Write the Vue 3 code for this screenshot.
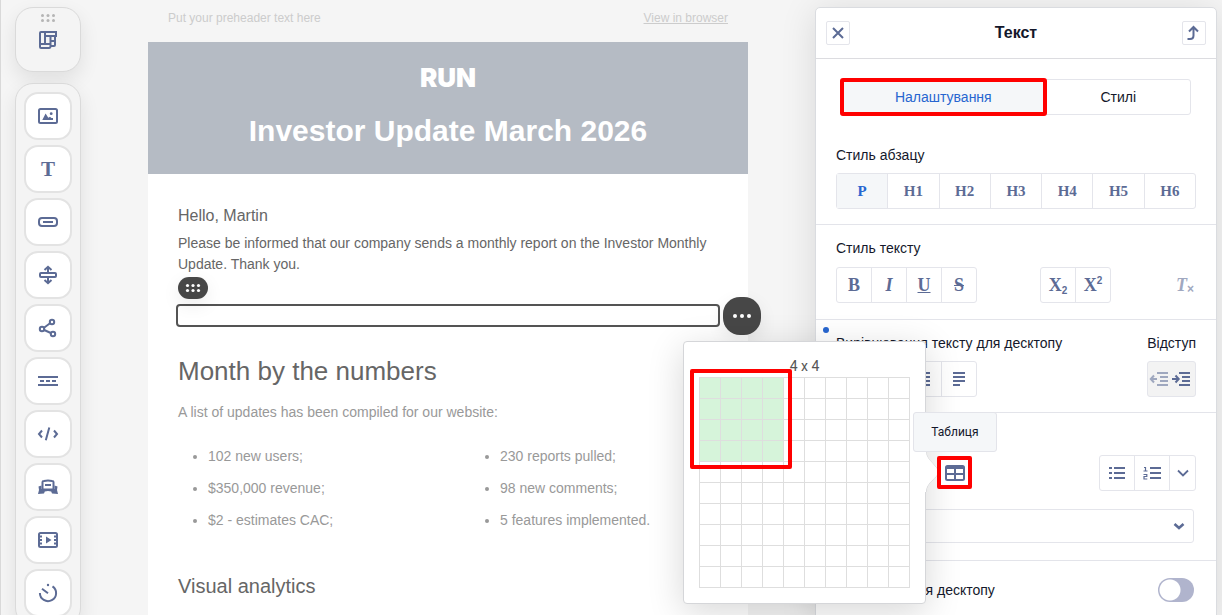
<script setup>
import { ref } from 'vue'

const paragraphStyles = ['P', 'H1', 'H2', 'H3', 'H4', 'H5', 'H6']
const activeStyle = ref('P')
const gridSize = 10
const picked = ref({ rows: 4, cols: 4 })
const isPicked = (i) =>
  i % gridSize < picked.value.cols && Math.floor(i / gridSize) < picked.value.rows
const pick = (i) => {
  picked.value = { rows: Math.floor(i / gridSize) + 1, cols: (i % gridSize) + 1 }
}
const leftList = ['102 new users;', '$350,000 revenue;', '$2 - estimates CAC;']
const rightList = ['230 reports pulled;', '98 new comments;', '5 features implemented.']
</script>

<template>
  <div class="editor">
    <aside class="rail">
      <div class="rail-top">
        <svg class="grip" width="14" height="8" viewBox="0 0 14 8" aria-hidden="true">
          <circle cx="1.500" cy="1.500" r="1.500" /><circle cx="7" cy="1.500" r="1.500" /><circle cx="12.500" cy="1.500" r="1.500" />
          <circle cx="1.500" cy="6.500" r="1.500" /><circle cx="7" cy="6.500" r="1.500" /><circle cx="12.500" cy="6.500" r="1.500" />
        </svg>
        <button class="plain" aria-label="Layouts">
          <svg class="icon" viewBox="0 0 24 24">
            <path d="M5 4H20V8H9V4M5 4Q4 4 4 5V19Q4 20 5 20H13Q14.500 20 14.500 18V8M4 16H14.500M9 8v8M14.500 13H19M19 8v9Q19 18 18 18H14.500" />
          </svg>
        </button>
      </div>
      <nav class="rail-list" aria-label="Blocks">
        <button class="tool" aria-label="Image">
          <svg class="icon" viewBox="0 0 24 24">
            <rect x="3" y="5" width="18" height="14" rx="1.500" />
            <path class="solid" d="M6.300 16 9.600 9.500l2.700 4.200 1.700-1 1.400 1.200H17V16z" />
            <circle class="solid" cx="15.200" cy="9.700" r="1.400" />
          </svg>
        </button>
        <button class="tool serif" aria-label="Text">T</button>
        <button class="tool" aria-label="Button">
          <svg class="icon" viewBox="0 0 24 24"><rect x="3" y="8" width="18" height="8" rx="3" /><path d="M7 12h10" /></svg>
        </button>
        <button class="tool" aria-label="Spacer">
          <svg class="icon" viewBox="0 0 24 24"><rect x="4" y="10" width="16" height="4" rx="1" /><path d="M12 10V4M8.500 7 12 3.800 15.500 7M12 14v6M8.500 17l3.500 3.200 3.500-3.200" /></svg>
        </button>
        <button class="tool" aria-label="Social">
          <svg class="icon" viewBox="0 0 24 24"><circle cx="16" cy="6" r="2.200" /><circle cx="6" cy="13" r="2.200" /><circle cx="17" cy="18" r="2.200" /><path d="M8 11.700 14 7.300M8.200 14l6.600 3" /></svg>
        </button>
        <button class="tool" aria-label="Divider">
          <svg class="icon" viewBox="0 0 24 24"><path d="M2 8h20M4 12h4M10 12h4M16 12h4M2 16h20" /></svg>
        </button>
        <button class="tool" aria-label="HTML">
          <svg class="icon" viewBox="0 0 24 24"><path d="M6 8.500 3 12l3 3.500M18 8.500 21 12l-3 3.500M13.300 5.500l-3.500 12.800" /></svg>
        </button>
        <button class="tool" aria-label="Banner">
          <svg class="icon" viewBox="0 0 24 24">
            <path d="M6.500 15V7Q6.500 6 8 6 12 5 16 6 17.500 6 17.500 7V15M5.500 14.500h13" /><path d="M9 10h6" />
            <path class="solid" d="M2.500 11.500 5.500 10.500V14h13v-3.500l3 1-.5 3.500 1 4-6-.5-.8-2q-3.200-.8-6.400 0l-.8 2-6 .5 1-4z" />
          </svg>
        </button>
        <button class="tool" aria-label="Video">
          <svg class="icon" viewBox="0 0 24 24"><rect x="3" y="5" width="18" height="14" rx="1.500" /><path d="M3 8.500h3M3 12h3M3 15.500h3M18 8.500h3M18 12h3M18 15.500h3" /><path class="solid" d="M10 8.500 15.500 12 10 15.500z" /></svg>
        </button>
        <button class="tool" aria-label="Timer">
          <svg class="icon" viewBox="0 0 24 24"><path d="M3.900 12a8.100 8.100 0 1 0 12.600-6.700M6 7.800l6 4.400" /><circle class="solid" cx="12" cy="4" r="1.200" /></svg>
        </button>
      </nav>
    </aside>

    <main class="canvas">
      <article class="email">
        <div class="preheader">
          <span>Put your preheader text here</span>
          <a href="#">View in browser</a>
        </div>
        <header class="hero">
          <div class="logo">RUN</div>
          <h1>Investor Update March 2026</h1>
        </header>
        <div class="body">
          <p class="hello">Hello, Martin</p>
          <p class="intro">Please be informed that our company sends a monthly report on the Investor Monthly Update. Thank you.</p>
          <div class="selected">
            <button class="handle" aria-label="Move block">
              <svg width="16" height="10" viewBox="0 0 16 10"><circle cx="2.500" cy="2.500" r="1.600" /><circle cx="8" cy="2.500" r="1.600" /><circle cx="13.500" cy="2.500" r="1.600" /><circle cx="2.500" cy="7.500" r="1.600" /><circle cx="8" cy="7.500" r="1.600" /><circle cx="13.500" cy="7.500" r="1.600" /></svg>
            </button>
            <button class="more" aria-label="More actions">
              <svg width="20" height="6" viewBox="0 0 20 6"><circle cx="3" cy="3" r="2" /><circle cx="10" cy="3" r="2" /><circle cx="17" cy="3" r="2" /></svg>
            </button>
          </div>
          <h2>Month by the numbers</h2>
          <p class="note">A list of updates has been compiled for our website:</p>
          <div class="lists">
            <ul><li v-for="t in leftList" :key="t">{{ t }}</li></ul>
            <ul><li v-for="t in rightList" :key="t">{{ t }}</li></ul>
          </div>
          <h3>Visual analytics</h3>
        </div>
      </article>
    </main>

    <aside class="panel">
      <header class="panel-head">
        <button class="square" aria-label="Закрити">
          <svg class="icon" viewBox="0 0 24 24"><path d="M7 7l10 10M17 7 7 17" /></svg>
        </button>
        <h2>Текст</h2>
        <button class="square" aria-label="Вище">
          <svg class="icon" viewBox="0 0 24 24"><path d="M5.500 18H8q3.500 0 3.500-3.500V6.500M7 10.500 11.500 6l4.500 4.500" /></svg>
        </button>
      </header>

      <div class="tabs" role="tablist">
        <button class="tab active" role="tab" aria-selected="true">Налаштування</button>
        <button class="tab" role="tab" aria-selected="false">Стилі</button>
      </div>

      <section class="first">
        <div class="label">Стиль абзацу</div>
        <div class="group stretch">
          <button v-for="s in paragraphStyles" :key="s" :class="{ on: s === activeStyle }" @click="activeStyle = s">{{ s }}</button>
        </div>
      </section>

      <section class="roomy">
        <div class="label">Стиль тексту</div>
        <div class="row">
          <div class="group letters">
            <button aria-label="Жирний">B</button>
            <button aria-label="Курсив"><i>I</i></button>
            <button aria-label="Підкреслений"><u>U</u></button>
            <button aria-label="Закреслений"><s>S</s></button>
          </div>
          <div class="group letters">
            <button aria-label="Нижній індекс">X<span class="low">2</span></button>
            <button aria-label="Верхній індекс">X<span class="high">2</span></button>
          </div>
          <button class="clear" aria-label="Очистити стиль"><i>T</i><span>×</span></button>
        </div>
      </section>

      <section class="align">
        <span class="dot"></span>
        <div class="row">
          <div class="label">Вирівнювання тексту для десктопу</div>
          <div class="label">Відступ</div>
        </div>
        <div class="row">
          <div class="group">
            <button v-for="n in 4" :key="n" :aria-label="'Вирівнювання ' + n">
              <svg class="icon" viewBox="0 0 24 24"><path d="M6 6h12M6 10h12M6 14h12" /><path :d="n === 3 ? 'M6 18h12' : 'M6 18h7'" /></svg>
            </button>
          </div>
          <div class="indent">
            <button class="plain faded" aria-label="Зменшити відступ">
              <svg class="icon" viewBox="0 0 24 24"><path d="M9 6h11M12 10h8M12 14h8M9 18h11M3 12h6M6 8.500 2.800 12 6 15.500" /></svg>
            </button>
            <button class="plain" aria-label="Збільшити відступ">
              <svg class="icon" viewBox="0 0 24 24"><path d="M9 6h11M12 10h8M12 14h8M9 18h11M2 12h6M5.500 8.500 8.700 12l-3.200 3.500" /></svg>
            </button>
          </div>
        </div>
      </section>

      <section class="insert">
        <div class="row">
          <div class="table-tool">
            <button class="table-button" aria-label="Таблиця">
              <svg class="icon" viewBox="0 0 24 24"><rect x="3" y="5" width="18" height="14" rx="1.500" /><path d="M3 7h18M3 13h18M12 7v12" /></svg>
            </button>
            <div class="popover">
              <svg class="tail" width="14" height="40" viewBox="0 0 14 40" aria-hidden="true"><path d="M1 0C1 8 13 14 13 20S1 30 1 40" /><path class="cover" d="M0 0h1C1 8 13 14 13 20S1 30 1 40H0z" /></svg>
              <div class="size">{{ picked.cols }} x {{ picked.rows }}</div>
              <div class="cells">
                <button v-for="i in gridSize * gridSize" :key="i" class="cell" :class="{ picked: isPicked(i - 1) }" :aria-label="'Клітинка ' + i" @click="pick(i - 1)"></button>
              </div>
              <div class="frame"></div>
            </div>
            <div class="tooltip" role="tooltip">Таблиця</div>
          </div>
          <div class="group lists-tools">
            <button aria-label="Маркований список">
              <svg class="icon" viewBox="0 0 24 24"><path d="M9 7h11M9 12h11M9 17h11M4 7h3M4 12h3M4 17h3" /></svg>
            </button>
            <button aria-label="Нумерований список">
              <svg class="icon" viewBox="0 0 24 24"><path d="M10 7h11M10 12h11M10 17h11" /><path class="thin" d="M4 6.500h1.500V10M3.500 10h4M3.500 13.500h3.300V15.500H4V18h3.300" /></svg>
            </button>
            <button class="narrow" aria-label="Інші списки">
              <svg class="icon" viewBox="0 0 24 24"><path class="mid" d="M7 9.500l5 5 5-5" /></svg>
            </button>
          </div>
        </div>
        <div class="select">
          <select aria-label="Змінні"><option></option></select>
          <svg class="icon" viewBox="0 0 24 24"><path class="heavy" d="M7.500 10l4.500 4 4.500-4" /></svg>
        </div>
      </section>

      <section class="adapt">
        <label class="row" for="desktop-toggle">
          <span class="label">Приховати для десктопу</span>
          <input id="desktop-toggle" class="toggle" type="checkbox" />
        </label>
      </section>
    </aside>
  </div>
</template>

<style>
body { margin: 0; overflow: hidden; }
</style>

<style scoped>
* { box-sizing: border-box; }
.editor {
  display: flex;
  height: 100vh;
  overflow: hidden;
  background: #f5f5f5;
  border-left: 1px solid #d9d9d9;
  font-family: "Liberation Sans", Arial, sans-serif;
  font-size: 14px;
}
button { font: inherit; color: #5c6b95; margin: 0; padding: 0; cursor: pointer; }
h1, h2, h3, p, ul { margin: 0; padding: 0; font-weight: 400; }
.icon { display: block; width: 24px; height: 24px; fill: none; stroke: #5c6b95; stroke-width: 2; flex: none; }
.icon .mid { stroke-width: 1.8; }
.icon .thin { stroke-width: 1.2; }
.icon .heavy { stroke-width: 2.6; }
.icon .solid { fill: #5c6b95; stroke: none; }
.plain { border: 0; background: none; display: flex; }

.rail { flex: none; width: 80px; padding: 7px 0 0 14px; display: flex; flex-direction: column; gap: 11px; }
.rail-top, .rail-list { border: 1px solid #dadada; background: #f4f4f4; box-shadow: 0 8px 20px rgba(0, 0, 0, 0.09); }
.rail-top { flex: none; height: 65px; border-radius: 18px; display: flex; flex-direction: column; align-items: center; gap: 6px; padding-top: 6px; }
.grip { fill: #b5b5b5; }
.rail-list { flex: none; border-radius: 18px; padding: 8px 0; display: flex; flex-direction: column; align-items: center; gap: 5px; }
.tool { width: 48px; height: 48px; display: flex; align-items: center; justify-content: center; border: 2px solid #e3e3e3; border-radius: 14px; background: #fff; }
.serif { font: bold 21px "Liberation Serif", serif; }

.canvas { flex: 1; display: flex; justify-content: center; }
.email { width: 600px; }
.preheader { height: 42px; padding: 8px 20px 0; display: flex; justify-content: space-between; font-size: 12px; line-height: 20px; color: #ccc; }
.preheader a { color: #ccc; }
.hero { height: 132px; background: #b5bbc4; color: #fff; text-align: center; padding-top: 20px; }
.logo { font: 900 26px/32px Inter, sans-serif; }
.hero h1 { font-size: 30px; font-weight: 700; line-height: 36px; padding-top: 19px; }
.body { background: #fff; padding: 32px 30px 40px; color: #666; }
.hello { font-size: 16px; line-height: 20px; }
.intro { line-height: 21px; padding-top: 7px; }
.selected { position: relative; margin: 29px -2px 0; height: 23px; border: 2px solid #545454; border-radius: 4px; }
.handle, .more { position: absolute; border: 0; background: #474747; display: flex; align-items: center; justify-content: center; fill: #fff; box-shadow: 0 6px 18px rgba(0, 0, 0, 0.08); }
.handle { left: 0; top: -29px; width: 30px; height: 22px; border-radius: 11px; }
.more { right: -43px; top: -9px; width: 38px; height: 38px; border-radius: 17px; }
.body h2 { font-size: 26px; line-height: 32px; padding-top: 28px; }
.note { color: #999; line-height: 20px; padding-top: 15px; }
.lists { display: grid; grid-template-columns: 292px 1fr; color: #999; padding-top: 18px; }
.lists ul { padding-left: 30px; }
.lists li { line-height: 32px; }
.body h3 { font-size: 20px; line-height: 24px; padding-top: 38px; }

.panel { position: relative; flex: none; width: 402px; margin: 7px 5px 0 0; height: 100vh; background: #fff; border: 1px solid #dadce0; border-radius: 5px 5px 0 0; box-shadow: 0 4px 36px rgba(0, 0, 0, 0.12); color: #14182b; }
.panel-head { height: 51px; border-bottom: 1px solid #dcdce0; display: flex; align-items: center; justify-content: space-between; padding: 0 10px; }
.panel-head h2 { font-size: 16px; font-weight: 700; }
.square { width: 24px; height: 24px; display: flex; align-items: center; justify-content: center; border: 1px solid #e4e5eb; border-radius: 2px; background: #fff; }
.tabs { display: flex; height: 36px; margin: 20px 25px 0; }
.tab { flex: 1 1 auto; color: #14182b; background: #fff; border: 1px solid #e4e5eb; border-radius: 0 3px 3px 0; }
.tab.active { color: #2766d0; background: #f5f7f9; border: 0; border-radius: 2px; outline: 4px solid #f00; outline-offset: -3px; z-index: 1; }
section { border-top: 1px solid #e3e4ea; padding: 13px 20px 15px; }
.first { border-top: 0; padding-top: 30px; }
.label { line-height: 20px; margin-bottom: 8px; }
.row { display: flex; justify-content: space-between; }
.roomy .label { margin-bottom: 9px; }
.roomy { padding-bottom: 16px; }
.group { display: flex; height: 36px; border: 1px solid #e4e5eb; border-radius: 3px; background: #fff; }
.group button { width: 35px; display: flex; align-items: center; justify-content: center; border: 0; border-left: 1px solid #e4e5eb; background: none; }
.group button:first-child { border-left: 0; width: 34px; }
.group button.narrow { width: 26px; }
.stretch { font: bold 15px "Liberation Serif", serif; }
.stretch button, .stretch button:first-child { flex: 1; width: auto; }
.group .on { background: #f5f7f9; color: #2766d0; }
.letters { font: bold 18px "Liberation Serif", serif; }
.low, .high { font: bold 10px "Liberation Sans", sans-serif; }
.low { padding-top: 10px; }
.high { padding-bottom: 10px; }
.clear { border: 0; background: none; width: 22px; color: #a0a8c0; font: bold 18px "Liberation Serif", serif; display: flex; align-items: center; justify-content: center; }
.clear span { font: bold 12px "Liberation Sans", sans-serif; padding-top: 8px; }
.align { position: relative; }
.dot { position: absolute; left: 7px; top: 7px; width: 6px; height: 6px; border-radius: 50%; background: #2766d0; }
.indent { display: flex; align-items: center; width: 49px; height: 36px; padding-right: 2px; justify-content: center; border: 1px solid #e4e5eb; border-radius: 3px; background: #f3f3f3; }
.indent .plain { width: 22px; justify-content: center; }
.faded { opacity: 0.55; }
.insert { padding: 42px 20px 17px; }
.table-tool { position: relative; margin: 1px 0 0 101px; height: 33px; z-index: 2; }
.table-button { width: 35px; height: 33px; display: flex; align-items: center; justify-content: center; border: 4px solid #f00; border-radius: 2px; background: #fff; position: relative; z-index: 2; }
.popover { position: absolute; left: -254px; top: -115px; width: 243px; padding: 14px 15px 15px; background: #fff; border: 1px solid #d5d6d9; border-radius: 4px; box-shadow: 0 8px 36px rgba(0, 0, 0, 0.16); }
.size { font: 14px/21px Roboto, sans-serif; color: #555; text-align: center; }
.tail { position: absolute; right: -14px; top: 110px; fill: none; stroke: #d5d6d9; }
.tail .cover { fill: #fff; stroke: none; }
.cells { display: grid; grid-template-columns: repeat(10, 21px); grid-auto-rows: 21px; border: solid #dedede; border-width: 1px 0 0 1px; width: 211px; }
.cell { border: solid #dedede; border-width: 0 1px 1px 0; background: #fff; }
.cell.picked { background: #d6f4da; }
.frame { position: absolute; left: 6px; top: 27px; width: 102px; height: 100px; border: 4px solid #f00; border-radius: 2px; pointer-events: none; }
.tooltip { position: absolute; left: -24px; top: -44px; width: 84px; height: 40px; border: 1px solid #e3e4ea; border-radius: 3px; background: #f5f7f9; font: 12px/38px Roboto, sans-serif; text-align: center; color: #14182b; z-index: 3; }
.select { display: flex; align-items: center; position: relative; margin: 18px 2px 0 0; }
.select select { appearance: none; width: 100%; height: 34px; border: 1px solid #e4e5eb; border-radius: 3px; background: #fff; }
.select .icon { position: absolute; right: 3px; pointer-events: none; }
.adapt { padding-top: 17px; }
.adapt .row { align-items: center; padding-right: 2px; }
.adapt .label { margin: 0; }
.toggle { appearance: none; margin: 0; width: 36px; height: 24px; border-radius: 12px; background: radial-gradient(circle at 12px 12px, #fff 10px, transparent 11px), #b0b4cd; }
</style>
